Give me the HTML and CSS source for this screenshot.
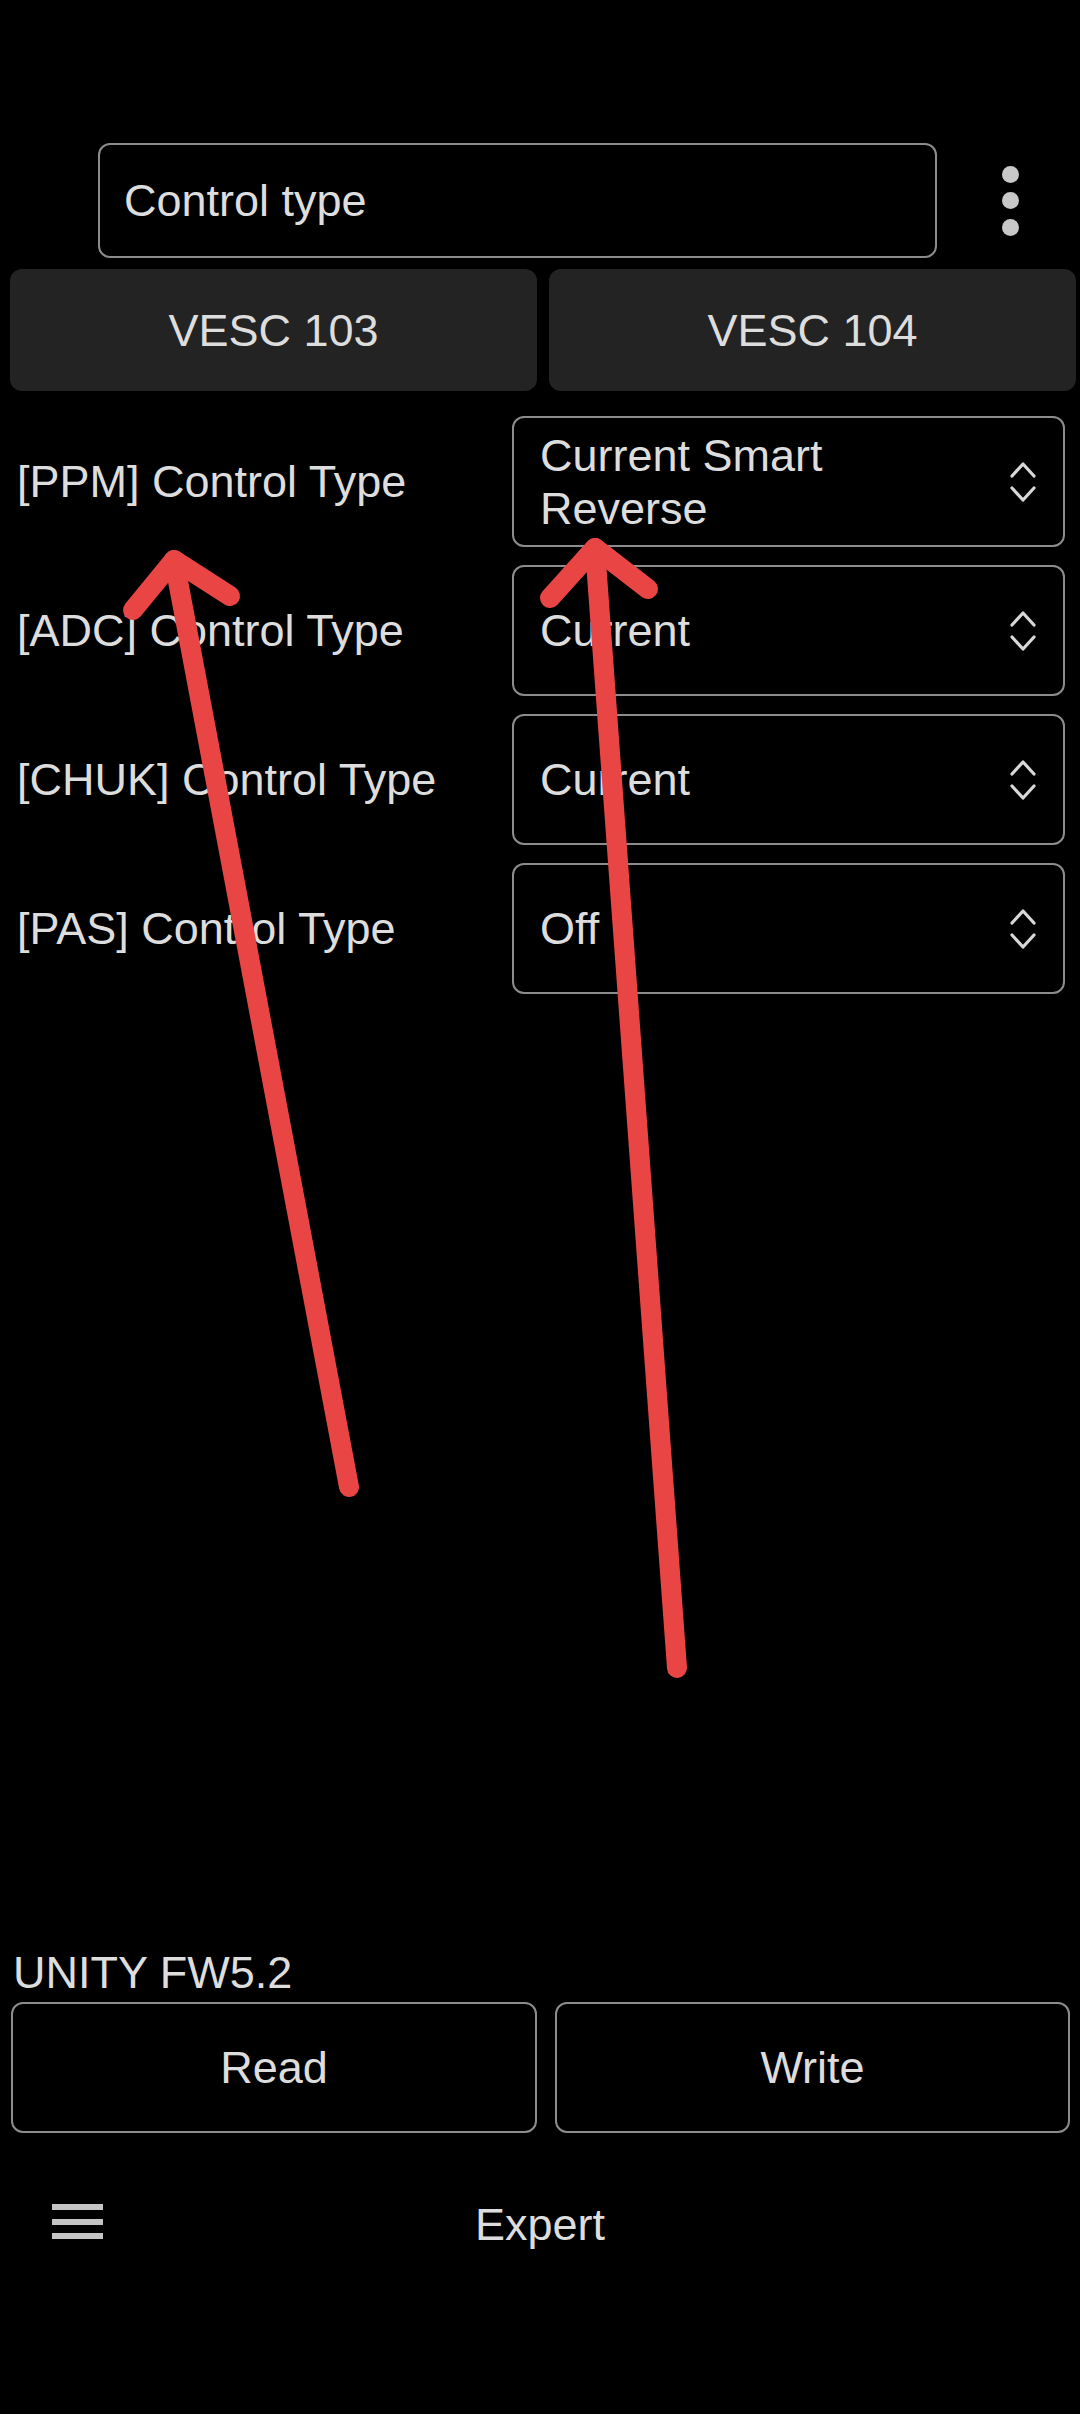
FILE: index.html
```html
<!DOCTYPE html>
<html>
<head>
<meta charset="utf-8">
<link rel="stylesheet" href="styles.css">
</head>
<body>
<div class="app">
  <div class="header">
    <div class="title-field">Control type</div>
    <div class="kebab"><span></span><span></span><span></span></div>
  </div>
  <div class="tabs">
    <div class="tab">VESC 103</div>
    <div class="tab">VESC 104</div>
  </div>
  <div class="rows">
    <div class="row">
      <div class="label">[PPM] Control Type</div>
      <div class="select">
        <div class="value">Current Smart Reverse</div>
        <svg class="chev" width="28" height="44" viewBox="0 0 28 44"><polyline points="3,16 14,4 25,16"/><polyline points="3,28 14,40 25,28"/></svg>
      </div>
    </div>
    <div class="row">
      <div class="label">[ADC] Control Type</div>
      <div class="select">
        <div class="value">Current</div>
        <svg class="chev" width="28" height="44" viewBox="0 0 28 44"><polyline points="3,16 14,4 25,16"/><polyline points="3,28 14,40 25,28"/></svg>
      </div>
    </div>
    <div class="row">
      <div class="label">[CHUK] Control Type</div>
      <div class="select">
        <div class="value">Current</div>
        <svg class="chev" width="28" height="44" viewBox="0 0 28 44"><polyline points="3,16 14,4 25,16"/><polyline points="3,28 14,40 25,28"/></svg>
      </div>
    </div>
    <div class="row">
      <div class="label">[PAS] Control Type</div>
      <div class="select">
        <div class="value">Off</div>
        <svg class="chev" width="28" height="44" viewBox="0 0 28 44"><polyline points="3,16 14,4 25,16"/><polyline points="3,28 14,40 25,28"/></svg>
      </div>
    </div>
  </div>
  <div class="spacer"></div>
  <div class="footer">
    <div class="fw">UNITY FW5.2</div>
    <div class="actions">
      <div class="btn">Read</div>
      <div class="btn">Write</div>
    </div>
    <div class="nav">
      <div class="hamburger"><span></span><span></span><span></span></div>
      <div class="nav-title">Expert</div>
      <div></div>
    </div>
  </div>
  <svg class="annot" width="1080" height="2414" viewBox="0 0 1080 2414">
    <polyline points="349,1487 174,560"/>
    <polyline points="133,610 174,560 230,596"/>
    <polyline points="677,1668 595,548"/>
    <polyline points="550,598 595,548 648,589"/>
  </svg>
</div>
</body>
</html>
```

FILE: styles.css
```css
html, body {
  margin: 0;
  padding: 0;
  background: #000;
}
body {
  font-family: "Liberation Sans", Arial, sans-serif;
  font-size: 45px;
  line-height: 53px;
  color: #dddddd;
}
.app {
  position: relative;
  width: 1080px;
  height: 2414px;
  display: flex;
  flex-direction: column;
  overflow: hidden;
}
.header {
  display: flex;
  align-items: center;
  padding-top: 143px;
}
.title-field {
  margin-left: 98px;
  width: 839px;
  height: 115px;
  box-sizing: border-box;
  border: 2px solid #8c8c8c;
  border-radius: 12px;
  padding-left: 24px;
  display: flex;
  align-items: center;
}
.kebab {
  margin-left: 65px;
  display: flex;
  flex-direction: column;
  gap: 9.5px;
}
.kebab span {
  width: 17px;
  height: 17px;
  border-radius: 50%;
  background: #c8c8c8;
}
.tabs {
  display: grid;
  grid-template-columns: 1fr 1fr;
  gap: 12px;
  padding: 0 4px 0 10px;
  margin-top: 11px;
}
.tab {
  height: 122px;
  background: #232323;
  border-radius: 12px;
  display: flex;
  align-items: center;
  justify-content: center;
}
.rows {
  margin-top: 25px;
  display: flex;
  flex-direction: column;
  gap: 18px;
  padding: 0 15px 0 17px;
}
.row {
  display: flex;
  align-items: center;
}
.label {
  flex: 1;
}
.select {
  width: 553px;
  height: 131px;
  box-sizing: border-box;
  border: 2px solid #8c8c8c;
  border-radius: 12px;
  padding-left: 26px;
  padding-right: 26px;
  display: flex;
  align-items: center;
}
.value {
  flex: 1;
  padding-right: 40px;
}
.chev {
  flex: none;
  fill: none;
  stroke: #d8d8d8;
  stroke-width: 3.2;
  stroke-linecap: round;
  stroke-linejoin: round;
}
.spacer {
  flex: 1;
}
.footer {
  padding-bottom: 163px;
}
.fw {
  padding-left: 13px;
}
.actions {
  display: grid;
  grid-template-columns: 526px 515px;
  gap: 18px;
  padding: 0 10px 0 11px;
  margin-top: 3px;
}
.btn {
  height: 131px;
  box-sizing: border-box;
  border: 2px solid #8c8c8c;
  border-radius: 12px;
  display: flex;
  align-items: center;
  justify-content: center;
}
.nav {
  margin-top: 65px;
  height: 53px;
  display: grid;
  grid-template-columns: 1fr auto 1fr;
  align-items: start;
}
.hamburger {
  margin-left: 52px;
  margin-top: 6px;
  width: 51px;
  height: 35px;
  display: flex;
  flex-direction: column;
  justify-content: space-between;
}
.hamburger span {
  height: 6px;
  background: #c4c4c4;
}
.annot {
  position: absolute;
  top: 0;
  left: 0;
  pointer-events: none;
  fill: none;
  stroke: #e94545;
  stroke-width: 20;
  stroke-linecap: round;
  stroke-linejoin: round;
}
```
